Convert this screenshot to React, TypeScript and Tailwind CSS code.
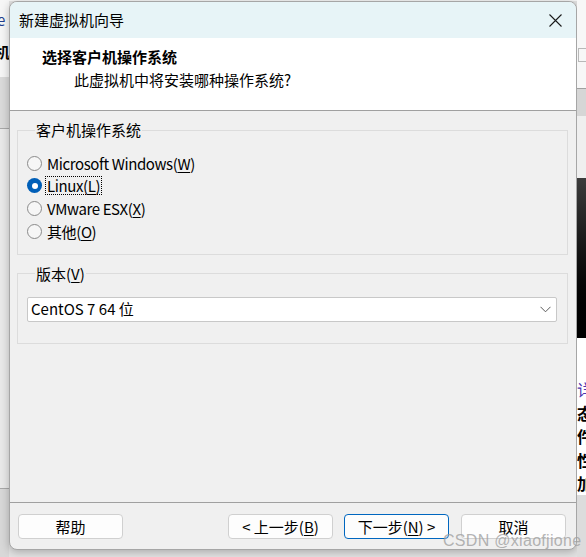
import type { ReactNode } from "react"

function U({ children }: { children: ReactNode }) {
    return <span className="underline underline-offset-[2px]">{children}</span>
}

function Radio({ checked, focus, children }: { checked?: boolean; focus?: boolean; children: ReactNode }) {
    return (
        <div className="flex items-center h-[22.67px]">
            {checked ? (
                <span className="w-[15px] h-[15px] rounded-full bg-[#005fb8] flex items-center justify-center">
                    <span className="w-[6px] h-[6px] rounded-full bg-white" />
                </span>
            ) : (
                <span className="w-[15px] h-[15px] rounded-full border border-[#8a8a8a] bg-[#f6f6f6]" />
            )}
            <span
                className={
                    focus
                        ? "ml-[4px] px-[1px] leading-[17px] tracking-[-0.4px] outline outline-1 outline-dotted outline-black"
                        : "ml-[4px] px-[1px] leading-[17px] tracking-[-0.4px]"
                }
            >
                {children}
            </span>
        </div>
    )
}

function Btn({ children, primary, className }: { children: ReactNode; primary?: boolean; className?: string }) {
    return (
        <button
            className={
                "w-[105px] h-[25px] rounded-[4px] bg-[#fdfdfd] flex items-center justify-center text-[15px] leading-none text-black " +
                (primary ? "border border-[#0067c0] " : "border border-[#d0d0d0] ") +
                (className ?? "")
            }
        >
            {children}
        </button>
    )
}

export default function App() {
    return (
        <div className="relative w-[586px] h-[557px] flex overflow-hidden bg-[#e2e2e2] font-['Noto_Sans_CJK_SC','Noto_Sans',sans-serif] text-black">
            {/* app behind, left edge */}
            <div className="w-[9px] flex flex-col shrink-0">
                <div className="h-[77px] bg-[#f6f6f6] overflow-hidden text-[15px] leading-[20px]">
                    <div className="-ml-[3px] mt-[10px] text-[#1f3f8f]">e</div>
                    <div className="-ml-[5px] mt-[12px] font-bold">机</div>
                </div>
                <div className="h-[51px] bg-[#dadada]" />
                <div className="h-px bg-[#a8a8a8]" />
                <div className="h-[359px] bg-[#e9e9e9]" />
                <div className="h-px bg-[#a8a8a8]" />
                <div className="flex-1 bg-[#d8d8d8]" />
            </div>

            {/* dialog column */}
            <div className="w-[568px] shrink-0 flex flex-col">
                <div className="h-px bg-[#f6f6f6]" />
                <div className="h-[549px] flex flex-col rounded-[8px] border border-[#a6a6a6] bg-[#f0f0f0] overflow-hidden shadow-[0_2px_8px_rgba(0,0,0,0.25)]">
                    {/* title bar */}
                    <div className="h-[36px] shrink-0 bg-[#e7f4f7] flex items-center pl-[9px] pr-[14px]">
                        <span className="text-[15px] leading-[20px]">新建虚拟机向导</span>
                        <svg className="ml-auto" width="13" height="13" viewBox="0 0 13 13">
                            <path d="M0.5 0.5 L12.5 12.5 M12.5 0.5 L0.5 12.5" stroke="#1b1b1b" strokeWidth="1.1" fill="none" />
                        </svg>
                    </div>

                    {/* header */}
                    <div className="h-[72px] shrink-0 bg-white pt-[9px]">
                        <div className="pl-[32px] text-[15px] leading-[20px] font-bold">选择客户机操作系统</div>
                        <div className="pl-[64px] mt-[3px] text-[15px] leading-[20px]">此虚拟机中将安装哪种操作系统?</div>
                    </div>
                    <div className="h-px shrink-0 bg-[#a0a0a0]" />

                    {/* body */}
                    <div className="h-[391px] shrink-0 pl-[7px] pr-[8px] pt-[9px] text-[15px]">
                        <fieldset className="border border-[#dcdcdc] pl-[9px] pr-[10px] pt-[12px] pb-[11px]">
                            <legend className="ml-[8px] px-[1px] leading-[20px]">客户机操作系统</legend>
                            <Radio>
                                Microsoft Windows(<U>W</U>)
                            </Radio>
                            <Radio checked focus>
                                Linux(<U>L</U>)
                            </Radio>
                            <Radio>
                                VMware ESX(<U>X</U>)
                            </Radio>
                            <Radio>
                                其他(<U>O</U>)
                            </Radio>
                        </fieldset>

                        <fieldset className="mt-[9px] border border-[#dcdcdc] pl-[9px] pr-[10px] pt-[13px] pb-[21px]">
                            <legend className="ml-[8px] px-[1px] leading-[20px]">
                                版本(<U>V</U>)
                            </legend>
                            <div className="h-[25px] bg-white border border-[#c8c8c8] rounded-[2px] flex items-center pl-[3px] pr-[5px]">
                                <span className="leading-[20px]">CentOS 7 64 位</span>
                                <svg className="ml-auto" width="11" height="7" viewBox="0 0 11 7">
                                    <polyline points="0.5,0.8 5.5,5.8 10.5,0.8" stroke="#5a5a5a" strokeWidth="1" fill="none" />
                                </svg>
                            </div>
                        </fieldset>
                    </div>

                    <div className="h-px shrink-0 bg-[#a0a0a0]" />

                    {/* footer */}
                    <div className="flex-1 flex items-start pt-[11px] pl-[8px] pr-[10px]">
                        <Btn>帮助</Btn>
                        <Btn className="ml-auto">
                            &lt; 上一步(<U>B</U>)
                        </Btn>
                        <Btn primary className="ml-[11px]">
                            下一步(<U>N</U>) &gt;
                        </Btn>
                        <Btn className="ml-[12px]">取消</Btn>
                    </div>
                </div>
            </div>

            {/* app behind, right edge */}
            <div className="w-[9px] flex flex-col shrink-0">
                <div className="h-[88px] bg-[#f7f7f7] relative">
                    <div className="mt-[48px] ml-[1px] w-[10px] h-[14px] border border-[#b8b8b8]" />
                </div>
                <div className="h-px bg-[#a0a0a0]" />
                <div className="h-[27px] bg-[#d6d6d6]" />
                <div className="h-[62px] bg-[#efefef]" />
                <div className="h-[160px] bg-gradient-to-b from-[#3c3c3c] via-[#111111] to-black" />
                <div className="h-[157px] bg-white overflow-hidden pt-[40px] text-[16px] leading-[23.5px] font-bold">
                    <div className="text-[#4a35b0] font-normal">详</div>
                    <div>态</div>
                    <div>件</div>
                    <div>性</div>
                    <div>加</div>
                </div>
                <div className="flex-1 bg-[#dcdcdc]" />
            </div>

            {/* watermark */}
            <div className="absolute left-[443px] top-[531px] text-[16px] leading-[20px] tracking-[0.3px] whitespace-nowrap font-['Liberation_Sans',sans-serif] text-[#a0a0a0]/80">
                CSDN @xiaofjione
            </div>
        </div>
    )
}
